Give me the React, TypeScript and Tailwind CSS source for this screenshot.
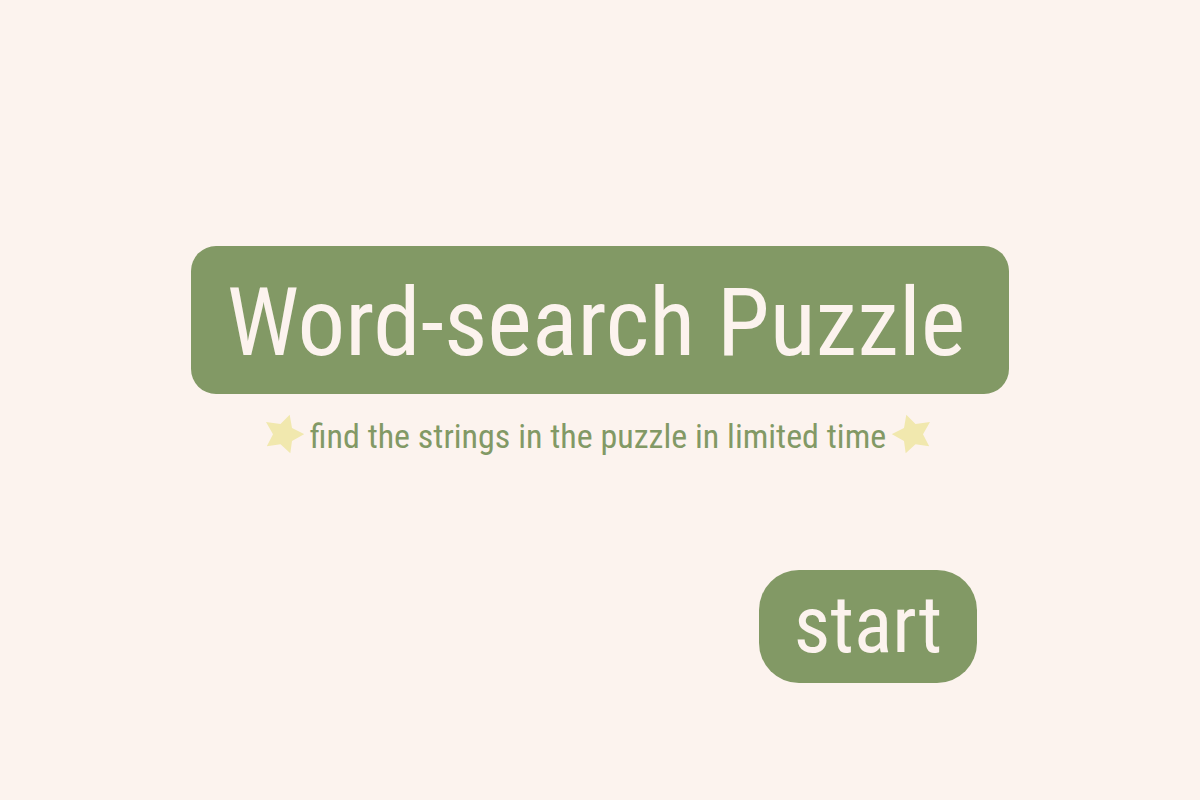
const FONT = "font-['Roboto_Condensed',Roboto,sans-serif]";

function Star({ flipped = false }: { flipped?: boolean }) {
  return (
    <svg
      viewBox="0 0 40 40"
      aria-hidden="true"
      className={flipped ? "size-10 shrink-0 -scale-x-100 fill-[#f1e8ae]" : "size-10 shrink-0 fill-[#f1e8ae]"}
    >
      <path d="M40.2 20.2 28 27 26.3 39.3 16.5 30.2 2.8 32.3 9 20.2 2 8 16.5 10 25.7.8 28 14Z" />
    </svg>
  );
}

export default function App() {
  return (
    <main className={`${FONT} flex min-h-screen flex-col items-center bg-[#fcf3ee] px-4 pt-[246px] text-[#829965]`}>
      <h1 className="flex h-[148px] w-full max-w-[818px] items-center justify-center rounded-[25px] bg-[#829965] pt-1 pr-2 text-[95px] leading-none whitespace-nowrap text-[#fcf3ee]">
        Word-search Puzzle
      </h1>
      <p className="mt-[18px] flex items-center gap-1.5 pr-1 text-[34px] leading-10 whitespace-nowrap">
        <Star />
        <span className="pt-1">find the strings in the puzzle in limited time</span>
        <Star flipped />
      </p>
      <div className="mt-[114px] flex w-full max-w-[818px] justify-end pr-8">
        <button type="button" className="h-[113px] w-[218px] cursor-pointer rounded-[40px] bg-[#829965] pb-1 text-[80px] leading-none text-[#fcf3ee]">
          start
        </button>
      </div>
    </main>
  );
}
